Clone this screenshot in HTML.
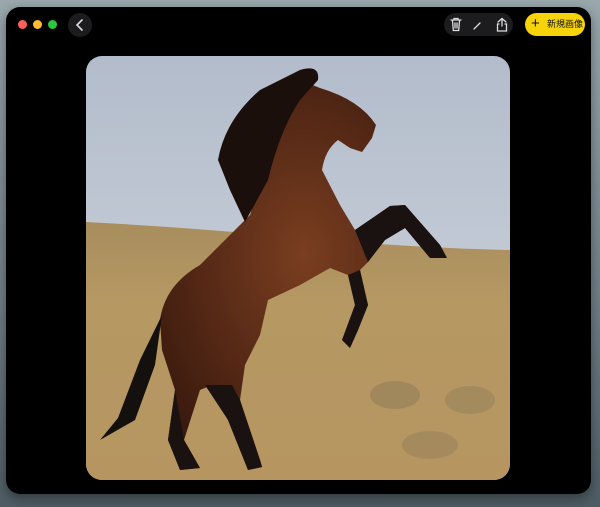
<!DOCTYPE html><html><head><meta charset="utf-8"><style>
body{margin:0;width:600px;height:507px;background:linear-gradient(180deg,#9aa8ad,#6f7f86 60%,#4e5c63);overflow:hidden;font-family:"Liberation Sans","Noto Sans CJK SC",sans-serif}
.win{position:absolute;left:6px;top:7px;width:585px;height:487px;background:#000;border-radius:14px;box-shadow:0 4px 12px rgba(0,0,0,.4)}
.dot{position:absolute;top:20px;width:9px;height:9px;border-radius:50%}
.back{position:absolute;left:68px;top:13px;width:24px;height:24px;border-radius:50%;background:#1c1c1e}
.tools{position:absolute;left:444px;top:13px;width:69px;height:23px;border-radius:12px;background:#1c1c1e}
.new{position:absolute;left:525px;top:13px;width:60px;height:23px;border-radius:12px;background:#f7d30a;font-size:9px;color:#111;line-height:23px}
.photo{position:absolute;left:86px;top:56px;width:424px;height:424px;border-radius:16px;overflow:hidden}
</style></head><body>
<div class="win"></div>
<div class="dot" style="left:18px;background:#fe5f57"></div>
<div class="dot" style="left:33px;background:#febc2e"></div>
<div class="dot" style="left:48px;background:#28c840"></div>
<div class="back"><svg width="24" height="24"><path d="M14 7l-5 5 5 5" stroke="#ddd" stroke-width="1.6" fill="none" stroke-linecap="round"/></svg></div>
<div class="tools"><svg width="69" height="23" fill="none" stroke="#ddd" stroke-width="1.3" stroke-linecap="round">
<path d="M7 7h10M10 7V5.5h4V7M8.5 7.5l.8 10h5.4l.8-10M11 10v5M13 10v5"/>
<path d="M30 16l6-6"/>
<path d="M54 9l4-3.5 4 3.5M58 6v7M55 11h-1.5v7h9v-7H61"/></svg></div>
<div class="new"><span style="font-size:15px;position:absolute;left:6px;top:-1px">+</span><span style="position:absolute;left:22px">新規画像</span></div>
<div class="photo"><svg width="424" height="424" viewBox="86 56 424 424">
<defs><linearGradient id="s" x1="0" y1="0" x2="0" y2="1"><stop offset="0" stop-color="#b3bccb"/><stop offset="1" stop-color="#d2d8e0"/></linearGradient>
<linearGradient id="g" x1="0" y1="0" x2="0" y2="1"><stop offset="0" stop-color="#a88d5e"/><stop offset=".3" stop-color="#b59862"/><stop offset="1" stop-color="#b69561"/></linearGradient>
<radialGradient id="h" cx=".5" cy=".45" r=".6"><stop offset="0" stop-color="#7a3e20"/><stop offset="1" stop-color="#3b1a0e"/></radialGradient></defs>
<rect x="86" y="56" width="424" height="424" fill="url(#s)"/>
<path d="M86 222 Q200 228 300 238 Q420 248 510 250 V480 H86Z" fill="url(#g)"/>
<ellipse cx="395" cy="395" rx="25" ry="14" fill="#8a7a58" opacity=".5"/><ellipse cx="470" cy="400" rx="25" ry="14" fill="#8a7a58" opacity=".4"/><ellipse cx="430" cy="445" rx="28" ry="14" fill="#8a7a58" opacity=".4"/>
<path d="M300 80 L320 88 Q360 100 376 125 L372 138 L362 152 L350 148 L338 140 Q325 150 322 170 L340 205 L355 230 L390 206 L405 205 L440 245 L447 258 L430 258 L405 228 L385 240 L368 262 L360 270 L368 305 L358 330 L350 348 L342 340 L355 305 L348 275 L330 268 L300 285 L268 300 L260 335 L245 365 L240 400 L260 460 L262 467 L248 470 L228 420 L212 385 L200 390 L184 440 L200 468 L180 470 L168 440 L175 390 L162 350 L160 320 Q165 285 200 265 L250 215 Q270 150 300 80Z" fill="url(#h)"/>
<path d="M300 70 Q320 64 318 80 L300 100 Q280 130 268 180 L245 222 L230 190 L218 160 Q225 120 260 90Z" fill="#1a0f0a"/>
<path d="M162 315 L155 365 L135 420 L100 440 L118 418 L140 360Z" fill="#14100d"/>
<path d="M355 230 L390 206 L405 205 L440 245 L447 258 L430 258 L405 228 L385 240 L368 262Z M360 270 L368 305 L358 330 L350 348 L342 340 L355 305 L348 275Z M205 385 L228 420 L248 470 L262 467 L260 460 L240 400 L232 385Z M175 390 L184 440 L200 468 L180 470 L168 440Z" fill="#1a1210"/>
</svg></div>
</body></html>
